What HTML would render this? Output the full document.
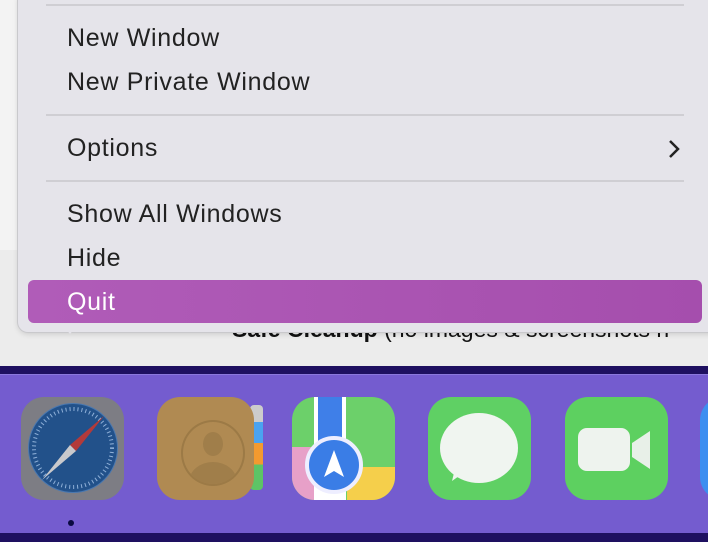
<!DOCTYPE html>
<html><head><style>
body{margin:0;width:708px;height:542px;overflow:hidden;position:relative;background:#f3f3f3;font-family:"Liberation Sans",sans-serif}
.abs{position:absolute}
.menu{left:18px;top:-10px;width:760px;height:342px;background:#e5e4ea;border-radius:10px;box-shadow:0 0 0 1px #c9c9cc,0 2px 6px rgba(0,0,0,.15)}
.sep{left:46px;width:638px;height:2px;background:#cfced3}
.item{left:67px;font-size:25px;color:#222;letter-spacing:0.7px;white-space:nowrap}
.icon{width:103px;height:103px;border-radius:23px}
</style></head><body>
<div class="abs" style="left:0;top:250px;width:708px;height:116px;background:#ececec"></div>
<div class="abs" style="left:232px;top:316px;font-size:23px;color:#111;white-space:nowrap"><b>Safe Cleanup</b> (no images &amp; screenshots n</div>
<div class="menu abs"></div>
<div class="abs" style="left:58px;top:320px;width:0;height:0;border-left:12px solid transparent;border-right:12px solid transparent;border-top:14px solid #e5e4ea"></div>
<div class="sep abs" style="top:4px"></div>
<div class="sep abs" style="top:114px"></div>
<div class="sep abs" style="top:180px"></div>
<div class="item abs" style="top:24px">New Window</div>
<div class="item abs" style="top:68px">New Private Window</div>
<div class="item abs" style="top:134px">Options</div>
<svg class="abs" style="left:667px;top:139px" width="14" height="20"><path d="M3 2l8 8-8 8" stroke="#222" stroke-width="2.5" fill="none"/></svg>
<div class="item abs" style="top:200px">Show All Windows</div>
<div class="item abs" style="top:244px">Hide</div>
<div class="abs" style="left:28px;top:280px;width:674px;height:43px;border-radius:6px;background:linear-gradient(90deg,#b05cb8,#a54ead)"></div>
<div class="item abs" style="top:288px;color:#fff">Quit</div>
<div class="abs" style="left:0;top:366px;width:708px;height:176px;background:#1e1060"></div>
<div class="abs" style="left:0;top:374px;width:708px;height:158px;background:#745ccf;border-top:1px solid #8b78dc"></div>
<div class="abs icon" style="left:21px;top:397px;background:#7d7d84"></div>
<div class="abs" style="left:28px;top:403px;width:88px;height:88px;border-radius:50%;background:#22518a;border:1px solid #4a78b0"></div>
<svg class="abs" style="left:28px;top:403px" width="90" height="90"><circle cx="45" cy="45" r="39" fill="none" stroke="#8fb0d8" stroke-width="4" stroke-dasharray="1 3"/><polygon points="76,13 48,48 42,42" fill="#b33a3a"/><polygon points="14,77 42,42 48,48" fill="#c9c9cc"/></svg>
<div class="abs" style="left:68px;top:520px;width:6px;height:6px;border-radius:50%;background:#0a0a40"></div>
<div class="abs" style="left:250px;top:405px;width:13px;height:85px;border-radius:4px;background:linear-gradient(#ccc 20%,#4aa3f0 20%,#4aa3f0 45%,#f39a2f 45%,#f39a2f 70%,#5dc466 70%)"></div>
<div class="abs icon" style="left:157px;top:397px;width:97px;background:#b08a52"></div>
<div class="abs" style="left:181px;top:420px;width:60px;height:62px;border-radius:50%;border:2px solid #9c7a46;overflow:hidden"><div class="abs" style="left:20px;top:10px;width:20px;height:24px;border-radius:50%;background:#a07e4a"></div><div class="abs" style="left:6px;top:40px;width:48px;height:40px;border-radius:50%;background:#a07e4a"></div></div>
<div class="abs icon" style="left:292px;top:397px;background:#6cd06a;overflow:hidden">
<div class="abs" style="left:0;top:50px;width:40px;height:53px;background:#e7a0c8"></div>
<div class="abs" style="left:55px;top:70px;width:48px;height:33px;background:#f5cf4b"></div>
<div class="abs" style="left:22px;top:0;width:32px;height:103px;background:#fff"></div>
<div class="abs" style="left:26px;top:0;width:24px;height:50px;background:#3f7fe8"></div>
</div>
<div class="abs" style="left:305px;top:436px;width:50px;height:50px;border-radius:50%;background:#3a7de6;border:4px solid #eef"></div>
<svg class="abs" style="left:309px;top:440px" width="50" height="50"><path d="M25 10l10 27-10-6-10 6z" fill="#fff"/></svg>
<div class="abs icon" style="left:428px;top:397px;background:#5fd064"></div>
<div class="abs" style="left:440px;top:413px;width:78px;height:70px;border-radius:50%;background:#f0f5f0"></div>
<svg class="abs" style="left:450px;top:465px" width="20" height="20"><path d="M6 0 L2 16 L16 6z" fill="#f0f5f0"/></svg>
<div class="abs icon" style="left:565px;top:397px;background:#5dd060"></div>
<div class="abs" style="left:578px;top:428px;width:52px;height:43px;border-radius:9px;background:#eef3ee"></div>
<svg class="abs" style="left:630px;top:427px" width="24" height="46"><path d="M2 16l18-12v38l-18-12z" fill="#e8f0e8"/></svg>
<div class="abs icon" style="left:700px;top:397px;background:#3d8ef0"></div>
</body></html>
